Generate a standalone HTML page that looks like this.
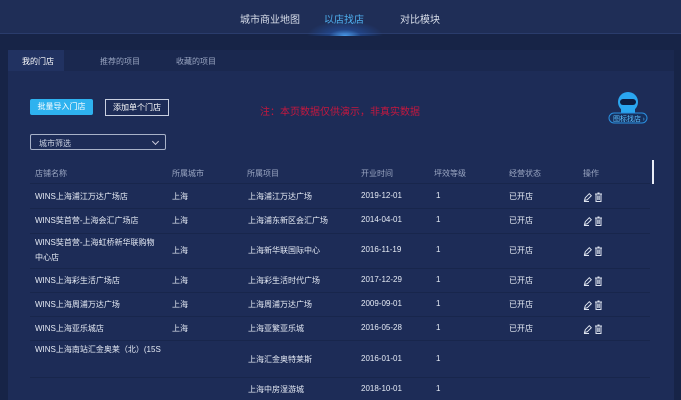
<!DOCTYPE html>
<html><head><meta charset="utf-8"><style>
*{margin:0;padding:0;box-sizing:border-box}
body{width:681px;height:400px;overflow:hidden;background:#172447;font-family:"Liberation Sans","Noto Sans CJK SC",sans-serif;color:#e6ebf5;font-size:8px;position:relative}
.top{position:absolute;left:0;top:0;width:681px;height:34px;background:#1f2e57;border-bottom:1px solid #2a3c6c}
.nav{position:absolute;top:11px;font-size:10px;color:#d8deea}
.glow{position:absolute;left:300px;top:18px;width:90px;height:18px;background:radial-gradient(ellipse at 50% 100%,rgba(80,170,255,.9) 0,rgba(40,110,220,.35) 25%,rgba(30,60,130,0) 60%)}
.panel{position:absolute;left:8px;top:50px;width:666px;height:350px;background:#1d2c57}
.tabs{position:absolute;left:0;top:0;width:666px;height:21px;background:#1a284f}
.tab{position:absolute;top:6px;font-size:8px;color:#9aa6c2}
.tab.a{left:0;top:0;width:56px;height:21px;background:#213261;color:#fff;padding:6px 0 0 14px}
.btn1{position:absolute;left:22px;top:49px;width:63px;height:16px;background:#2eb2ef;border-radius:2px;color:#fff;font-size:8px;text-align:center;line-height:16px}
.btn2{position:absolute;left:97px;top:49px;width:64px;height:17px;border:1px solid #c9d0e0;color:#fff;font-size:8px;text-align:center;line-height:15px}
.note{position:absolute;left:252px;top:53px;color:#c5173f;font-size:10px}
.sel{position:absolute;left:22px;top:84px;width:136px;height:16px;border:1px solid #a8b2c8;border-radius:2px;color:#c9d0e0;font-size:8px;padding:3px 0 0 8px}
.sel:after{content:"";position:absolute;right:7px;top:4px;width:4px;height:4px;border-right:1px solid #ccd;border-bottom:1px solid #ccd;transform:rotate(45deg)}
.c{position:absolute;font-size:8px;white-space:nowrap}
.h{color:#9aa6c2}
.line{position:absolute;left:22px;width:620px;height:1px;background:#18264c}
.ico{position:absolute;width:20px}
</style></head><body>
<div class="top"></div>
<div class="glow"></div>
<div class="nav" style="left:240px">城市商业地图</div>
<div class="nav" style="left:324px;color:#4fb0f0">以店找店</div>
<div class="nav" style="left:400px">对比模块</div>
<div class="panel">
 <div class="tabs"><div class="tab a">我的门店</div><div class="tab" style="left:92px">推荐的项目</div><div class="tab" style="left:168px">收藏的项目</div></div>
 <div class="btn1">批量导入门店</div>
 <div class="btn2">添加单个门店</div>
 <div class="note">注：本页数据仅供演示，非真实数据</div>
 <div class="sel">城市筛选</div>
 <svg style="position:absolute;left:599px;top:38px" width="42" height="36" viewBox="0 0 42 36">
  <circle cx="21" cy="14" r="10" fill="#2aa6f0"/><rect x="13" y="11" width="16" height="6" rx="3" fill="#0c1c40"/>
  <rect x="14" y="20" width="14" height="5" fill="#2aa6f0"/>
  <rect x="2" y="25" width="38" height="10" rx="5" fill="#16305e" stroke="#2a8fe0" stroke-width="1"/>
  <text x="6" y="33" font-size="7" fill="#5ec0ff" font-family="Noto Sans CJK SC,sans-serif">图标找店 ›</text>
 </svg>
 <div style="position:absolute;left:644px;top:110px;width:2px;height:24px;background:#e8ecf5"></div>
</div>
<div class="c h" style="left:35px;top:168px">店铺名称</div><div class="c h" style="left:172px;top:168px">所属城市</div><div class="c h" style="left:247px;top:168px">所属项目</div><div class="c h" style="left:361px;top:168px">开业时间</div><div class="c h" style="left:434px;top:168px">坪效等级</div><div class="c h" style="left:509px;top:168px">经营状态</div><div class="c h" style="left:583px;top:168px">操作</div>
<div class="line" style="top:183px;left:30px"></div>
<div id="rows"></div>
<script>
var R=[[196,"WINS上海浦江万达广场店","上海浦江万达广场","2019-12-01"],[220,"WINS奘首营-上海会汇广场店","上海浦东新区会汇广场","2014-04-01"],[250,"WINS奘首营-上海虹桥新华联购物|中心店","上海新华联国际中心","2016-11-19"],[280,"WINS上海彩生活广场店","上海彩生活时代广场","2017-12-29"],[304,"WINS上海周浦万达广场","上海周浦万达广场","2009-09-01"],[328,"WINS上海亚乐城店","上海亚繁亚乐城","2016-05-28"],[359,"WINS上海南站汇金奥莱（北）(15S","上海汇金奥特莱斯","2016-01-01"],[389,"","上海中房湿游城","2018-10-01"]];
var L=[208,233,268,292,316,340,377];var h="";
R.forEach(function(r,i){var y=r[0]-5;var n=r[1];
 if(n.indexOf("|")>0){var p=n.split("|");h+='<div class="c" style="left:35px;top:'+(y-8)+'px">'+p[0]+'</div><div class="c" style="left:35px;top:'+(y+7)+'px">'+p[1]+'</div>';}
 else if(i==6){h+='<div class="c" style="left:35px;top:'+(y-10)+'px">'+n+'</div>';}
 else h+='<div class="c" style="left:35px;top:'+y+'px">'+n+'</div>';
 if(i<6)h+='<div class="c" style="left:172px;top:'+y+'px">上海</div><div class="c" style="left:509px;top:'+y+'px">已开店</div><svg class="ico" style="left:583px;top:'+(y+1)+'px" height="10" viewBox="0 0 20 10"><path d="M1.5 8.5l0.8-2.8 4-4 2 2-4 4z M1 9.5h5" stroke="#dfe5f0" fill="none" stroke-width="1"/><path d="M12 2h7M13 2v7.5h5v-7.5M14.5 1h2M14.8 3.5v4.5M16.2 3.5v4.5" stroke="#dfe5f0" fill="none" stroke-width="1"/></svg>';
 h+='<div class="c" style="left:248px;top:'+y+'px">'+r[2]+'</div><div class="c" style="left:361px;top:'+y+'px">'+r[3]+'</div><div class="c" style="left:436px;top:'+y+'px">1</div>';
});
L.forEach(function(y){h+='<div class="line" style="top:'+y+'px;left:30px"></div>'});
document.getElementById("rows").innerHTML=h;
</script>
</body></html>
